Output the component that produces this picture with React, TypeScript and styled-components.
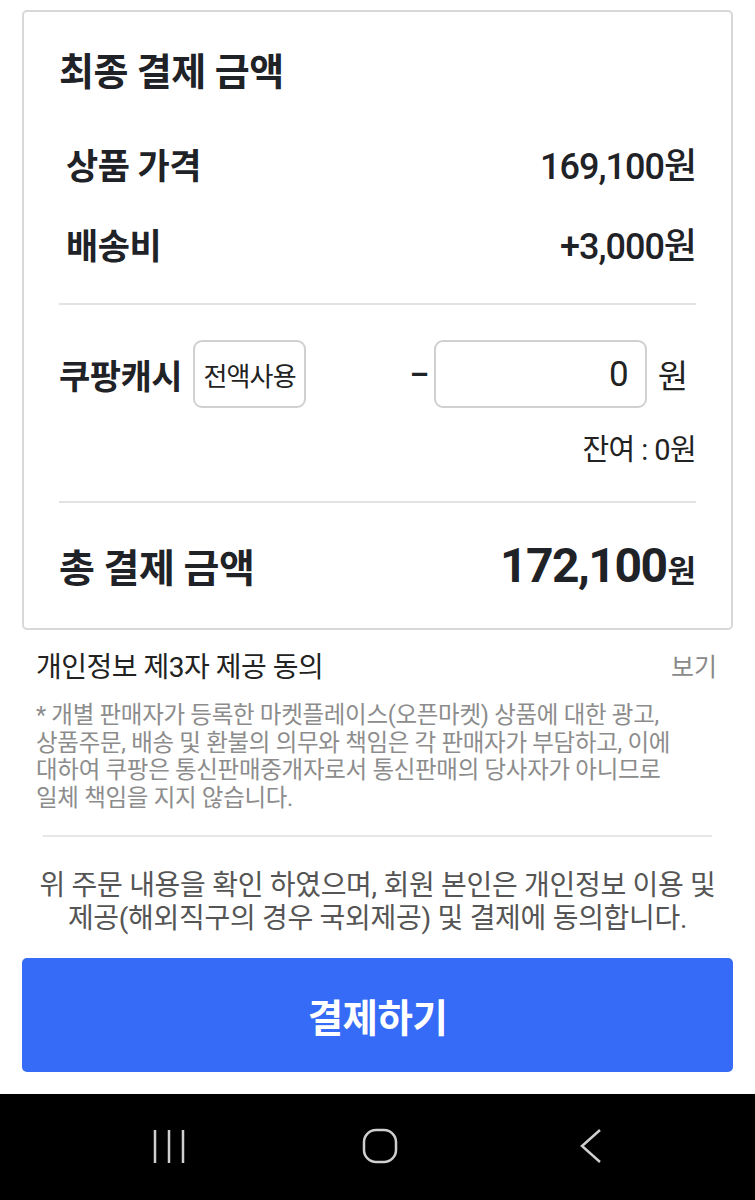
import * as React from 'react';
import styled, { createGlobalStyle } from 'styled-components';

const GlobalStyle = createGlobalStyle`
  html, body {
    margin: 0;
    padding: 0;
    background: #ffffff;
  }
  body {
    font-family: Roboto, 'Noto Sans CJK KR', sans-serif;
    color: #1f2226;
    -webkit-font-smoothing: antialiased;
  }
`;

const Screen = styled.div`
  width: 755px;
  height: 1200px;
  display: flex;
  flex-direction: column;
  overflow: hidden;
`;

const SummaryCard = styled.section`
  margin: 10px 22px 0;
  padding: 38px 35px 33px;
  border: 2px solid #d8d8d8;
  border-radius: 5px;
  display: flex;
  flex-direction: column;
`;

const CardTitle = styled.h2`
  margin: 0 0 28px;
  font-size: 38px;
  line-height: 45px;
  font-weight: 700;
  letter-spacing: -0.5px;
`;

const Row = styled.div<{ $height: number; $indent?: number }>`
  height: ${p => p.$height}px;
  padding-left: ${p => p.$indent || 0}px;
  display: flex;
  align-items: center;
  justify-content: space-between;
`;

const RowLabel = styled.span<{ $size?: number }>`
  font-size: ${p => p.$size || 35}px;
  font-weight: 700;
  letter-spacing: -0.5px;
`;

const Amount = styled.span`
  font-size: 36px;
  font-weight: 500;
  letter-spacing: -1px;
`;

const Divider = styled.hr<{ $top: number; $bottom: number }>`
  margin: ${p => p.$top}px 0 ${p => p.$bottom}px;
  border: 0;
  border-top: 2px solid #e2e2e2;
`;

const CashLeft = styled.div`
  display: flex;
  align-items: center;
  gap: 11px;
`;

const CashRight = styled.div`
  display: flex;
  align-items: center;
`;

const UseAllButton = styled.button`
  width: 113px;
  height: 68px;
  padding: 0;
  border: 2px solid #d0d0d0;
  border-radius: 9px;
  background: #fff;
  font-family: inherit;
  font-size: 26px;
  color: #222;
  letter-spacing: -0.8px;
`;

const Minus = styled.span`
  font-size: 30px;
  font-weight: 700;
  margin-right: 5px;
`;

const CashInput = styled.div`
  width: 213px;
  height: 68px;
  box-sizing: border-box;
  border: 2px solid #d0d0d0;
  border-radius: 9px;
  display: flex;
  align-items: center;
  justify-content: flex-end;
  padding-right: 16px;
  font-size: 35px;
  color: #222;
`;

const Won = styled.span`
  margin: 0 8px 0 11px;
  font-size: 33px;
  color: #222;
`;

const Balance = styled.div`
  margin-top: 26px;
  text-align: right;
  font-size: 29px;
  line-height: 33px;
  color: #222;
  letter-spacing: -0.6px;
`;

const TotalAmount = styled.span`
  font-size: 48px;
  font-weight: 700;
  letter-spacing: -1.5px;

  small {
    font-size: 31px;
    font-weight: 700;
    margin-left: 1px;
    letter-spacing: 0;
  }
`;

const Consent = styled.section`
  padding: 0 38px 0 36px;
`;

const ConsentHead = styled.div`
  margin-top: 20px;
  height: 30px;
  display: flex;
  align-items: center;
  justify-content: space-between;
`;

const ConsentTitle = styled.span`
  font-size: 28px;
  color: #222;
  letter-spacing: -0.5px;
`;

const ViewLink = styled.span`
  font-size: 25px;
  color: #8a8a8a;
`;

const Notice = styled.p`
  margin: 22px 0 0;
  font-size: 23.5px;
  line-height: 27.5px;
  color: #8c8c8c;
  letter-spacing: -0.3px;
`;

const ConsentDivider = styled.hr`
  margin: 23px 43px 0;
  border: 0;
  border-top: 2px solid #e6e6e6;
`;

const Agreement = styled.p`
  margin: 32px 0 0;
  text-align: center;
  font-size: 28px;
  line-height: 33px;
  color: #555;
  letter-spacing: -0.3px;
`;

const PayButton = styled.button`
  margin: 23px 22px 0;
  height: 114px;
  border: 0;
  border-radius: 5px;
  background: #356bf6;
  color: #fff;
  font-family: inherit;
  font-size: 38.5px;
  font-weight: 700;
  letter-spacing: -0.5px;
`;

const NavBar = styled.nav`
  margin-top: auto;
  height: 106px;
  background: #000;
  display: grid;
  grid-template-columns: repeat(3, 211px);
  justify-content: center;
  align-items: center;
  padding: 0 0 2px 5px;
  box-sizing: border-box;
`;

const NavSlot = styled.div`
  display: flex;
  justify-content: center;
  color: #cfcfcf;
`;

const RecentsIcon = () => (
  <svg width="34" height="36" viewBox="0 0 34 36" fill="none" stroke="currentColor" strokeWidth="2.5">
    <path d="M3 2v33M17 2v33M31 2v33" />
  </svg>
);

const HomeIcon = () => (
  <svg width="36" height="36" viewBox="0 0 36 36" fill="none" stroke="currentColor" strokeWidth="2.5">
    <rect x="2" y="2" width="32" height="32" rx="12" />
  </svg>
);

const BackIcon = () => (
  <svg width="24" height="36" viewBox="0 0 24 36" fill="none" stroke="currentColor" strokeWidth="2.5">
    <path d="M21 2L3 18l18 16" />
  </svg>
);

export default function App() {
  return (
    <Screen>
      <GlobalStyle />
      <SummaryCard>
        <CardTitle>최종 결제 금액</CardTitle>
        <Row $height={80} $indent={7}>
          <RowLabel>상품 가격</RowLabel>
          <Amount>169,100원</Amount>
        </Row>
        <Row $height={80} $indent={7}>
          <RowLabel>배송비</RowLabel>
          <Amount>+3,000원</Amount>
        </Row>
        <Divider $top={20} $bottom={35} />
        <Row $height={68}>
          <CashLeft>
            <RowLabel $size={34}>쿠팡캐시</RowLabel>
            <UseAllButton>전액사용</UseAllButton>
          </CashLeft>
          <CashRight>
            <Minus>–</Minus>
            <CashInput>0</CashInput>
            <Won>원</Won>
          </CashRight>
        </Row>
        <Balance>잔여 : 0원</Balance>
        <Divider $top={34} $bottom={32} />
        <Row $height={60}>
          <RowLabel $size={39}>총 결제 금액</RowLabel>
          <TotalAmount>
            172,100<small>원</small>
          </TotalAmount>
        </Row>
      </SummaryCard>

      <Consent>
        <ConsentHead>
          <ConsentTitle>개인정보 제3자 제공 동의</ConsentTitle>
          <ViewLink>보기</ViewLink>
        </ConsentHead>
        <Notice>
          * 개별 판매자가 등록한 마켓플레이스(오픈마켓) 상품에 대한 광고,
          <br />
          상품주문, 배송 및 환불의 의무와 책임은 각 판매자가 부담하고, 이에
          <br />
          대하여 쿠팡은 통신판매중개자로서 통신판매의 당사자가 아니므로
          <br />
          일체 책임을 지지 않습니다.
        </Notice>
      </Consent>
      <ConsentDivider />
      <Agreement>
        위 주문 내용을 확인 하였으며, 회원 본인은 개인정보 이용 및
        <br />
        제공(해외직구의 경우 국외제공) 및 결제에 동의합니다.
      </Agreement>
      <PayButton>결제하기</PayButton>

      <NavBar>
        <NavSlot>
          <RecentsIcon />
        </NavSlot>
        <NavSlot>
          <HomeIcon />
        </NavSlot>
        <NavSlot>
          <BackIcon />
        </NavSlot>
      </NavBar>
    </Screen>
  );
}
